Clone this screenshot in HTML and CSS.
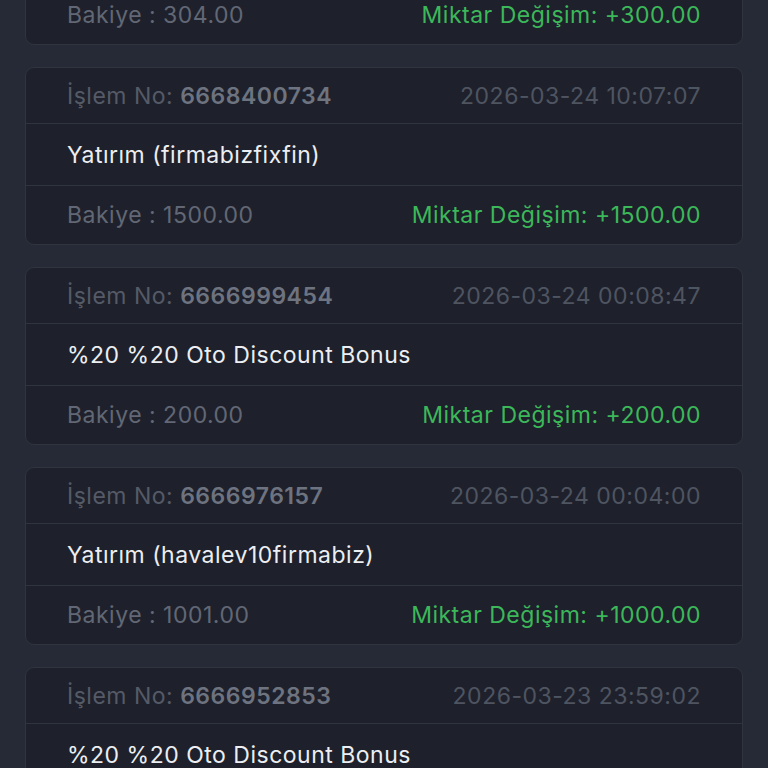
FILE: index.html
```html
<!DOCTYPE html>
<html lang="tr">
<head>
  <meta charset="UTF-8">
  <meta name="viewport" content="width=device-width, initial-scale=1.0">
  <title>İşlem Geçmişi</title>
  <link rel="stylesheet" href="styles.css">
</head>
<body>
  <div class="list">
    <div class="card">
      <div class="row head"><span>İşlem No: <b>6668412290</b></span><span class="date">2026-03-24 10:20:11</span></div>
      <div class="row desc">Yatırım (firmabizfixfin)</div>
      <div class="row foot"><span>Bakiye : 304.00</span><span class="change">Miktar Değişim: +300.00</span></div>
    </div>
    <div class="card">
      <div class="row head"><span>İşlem No: <b>6668400734</b></span><span class="date">2026-03-24 10:07:07</span></div>
      <div class="row desc">Yatırım (firmabizfixfin)</div>
      <div class="row foot"><span>Bakiye : 1500.00</span><span class="change">Miktar Değişim: +1500.00</span></div>
    </div>
    <div class="card">
      <div class="row head"><span>İşlem No: <b>6666999454</b></span><span class="date">2026-03-24 00:08:47</span></div>
      <div class="row desc">%20 %20 Oto Discount Bonus</div>
      <div class="row foot"><span>Bakiye : 200.00</span><span class="change">Miktar Değişim: +200.00</span></div>
    </div>
    <div class="card">
      <div class="row head"><span>İşlem No: <b>6666976157</b></span><span class="date">2026-03-24 00:04:00</span></div>
      <div class="row desc">Yatırım (havalev10firmabiz)</div>
      <div class="row foot"><span>Bakiye : 1001.00</span><span class="change">Miktar Değişim: +1000.00</span></div>
    </div>
    <div class="card">
      <div class="row head"><span>İşlem No: <b>6666952853</b></span><span class="date">2026-03-23 23:59:02</span></div>
      <div class="row desc">%20 %20 Oto Discount Bonus</div>
      <div class="row foot"><span>Bakiye : 200.00</span><span class="change">Miktar Değişim: +200.00</span></div>
    </div>
  </div>
</body>
</html>
```

FILE: styles.css
```css
* {
  padding: 0;
  margin: 0;
  box-sizing: border-box;
}
html, body {
  height: 100%;
  overflow: hidden;
}
body {
  background-color: #262a36;
  font-family: Inter, "Noto Sans", sans-serif;
  font-size: 23px;
  letter-spacing: 0.5px;
  color: #e9eaee;
}
.list {
  display: flex;
  flex-direction: column;
  gap: 22px;
  padding: 0 25px;
  margin-top: -133px;
}
.card {
  background-color: #1e212b;
  border: 1px solid #30343f;
  border-radius: 9px;
  flex-shrink: 0;
}
.row {
  display: flex;
  align-items: center;
  justify-content: space-between;
  padding: 0 41px;
  white-space: nowrap;
}
.head {
  height: 56px;
  border-bottom: 1px solid #30343f;
  color: #555a67;
}
.head b {
  color: #6e7380;
  font-weight: 600;
}
.date {
  color: #4f5461;
}
.desc {
  height: 62px;
  border-bottom: 1px solid #30343f;
  color: #eceef2;
}
.foot {
  height: 58px;
  color: #626775;
}
.change {
  color: #3cb85a;
}
```
